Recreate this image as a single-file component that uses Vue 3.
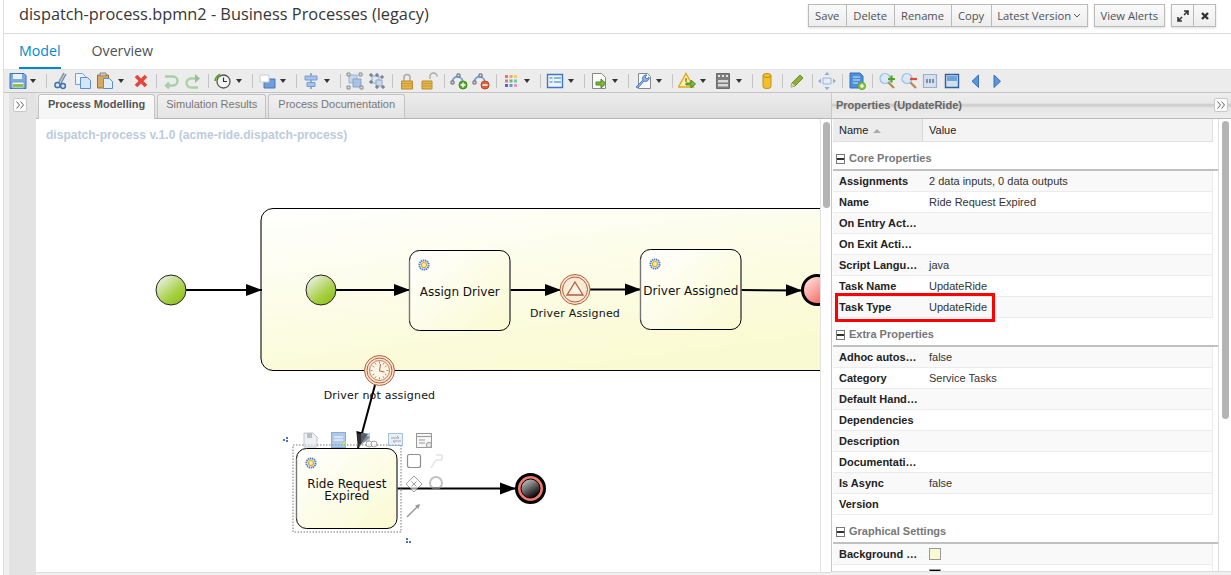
<template>
  <div class="page">
    <header class="title-bar">
      <h1>dispatch-process.bpmn2 - Business Processes (legacy)</h1>
      <div class="actions">
        <div class="btn-group">
          <button>Save</button>
          <button>Delete</button>
          <button>Rename</button>
          <button>Copy</button>
          <button class="version">Latest Version
            <svg width="8" height="5" viewBox="0 0 8 5"><path d="M1 1l3 3 3-3" fill="none" stroke="#555" stroke-width="1" /></svg>
          </button>
        </div>
        <div class="btn-group"><button class="alerts">View Alerts</button></div>
        <div class="btn-group">
          <button class="square">
            <svg width="12" height="12" viewBox="0 0 12 12"><path d="M1 11l4-4M7 5l4-4M7 1h4v4M1 7v4h4" fill="none" stroke="#333" stroke-width="1.6" /></svg>
          </button>
          <button class="square">
            <svg width="10" height="10" viewBox="0 0 10 10"><path d="M2 2l6 6M8 2l-6 6" fill="none" stroke="#333" stroke-width="2.4" /></svg>
          </button>
        </div>
      </div>
    </header>

    <nav class="tabs">
      <a class="active">Model</a>
      <a>Overview</a>
    </nav>

    <div class="toolbar">
      <template v-for="(t, i) in tools" :key="i">
        <span v-if="t === '|'" class="sep" />
        <span v-else class="tool">
          <svg width="18" height="18" viewBox="0 0 18 18">
            <path
              v-for="(p, j) in icons[t.icon]"
              :key="j"
              :d="p[0]"
              :fill="p[1]"
              :stroke="p[2] || 'none'"
              :stroke-width="p[3] || 1"
            />
          </svg>
          <span v-if="t.menu" class="caret" />
        </span>
      </template>
    </div>

    <div class="workspace">
      <aside class="left-strip">
        <span class="collapse">
          <svg width="12" height="12" viewBox="0 0 12 12"><path d="M2.500 2.500l3 3.500-3 3.500M6.500 2.500l3 3.500-3 3.500" fill="none" stroke="#666" /></svg>
        </span>
      </aside>

      <section class="editor">
        <div class="editor-tabs">
          <span class="etab current">Process Modelling</span>
          <span class="etab">Simulation Results</span>
          <span class="etab">Process Documentation</span>
        </div>
        <div class="canvas-wrap">
          <svg class="canvas" viewBox="36 119 784 453" width="784" height="453">
            <defs>
              <linearGradient id="taskFill" x1="0" y1="0" x2="1" y2="1">
                <stop offset="0" stop-color="#ffffff" />
                <stop offset="1" stop-color="#fafad2" />
              </linearGradient>
              <linearGradient id="subFill" x1="0" y1="0" x2="0.5" y2="1">
                <stop offset="0" stop-color="#ffffff" />
                <stop offset="1" stop-color="#fafad2" />
              </linearGradient>
              <linearGradient id="startFill" x1="0.15" y1="0.1" x2="0.8" y2="0.9">
                <stop offset="0" stop-color="#e8efdf" />
                <stop offset="0.65" stop-color="#a9d048" />
                <stop offset="1" stop-color="#93c41f" />
              </linearGradient>
              <linearGradient id="endFill" x1="0.1" y1="0.1" x2="0.8" y2="0.9">
                <stop offset="0" stop-color="#ffe3e0" />
                <stop offset="1" stop-color="#f4635a" />
              </linearGradient>
              <linearGradient id="sphere" x1="0.2" y1="0.1" x2="0.7" y2="0.9">
                <stop offset="0" stop-color="#b8b8b8" />
                <stop offset="1" stop-color="#0c0c0c" />
              </linearGradient>
              <radialGradient id="eventFill">
                <stop offset="0" stop-color="#fdf6e6" />
                <stop offset="1" stop-color="#f8e3cf" />
              </radialGradient>
              <g id="gear">
                <circle r="4.6" fill="none" stroke="#4f7fc4" stroke-width="2" stroke-dasharray="1.4 0.6" />
                <circle r="3.2" fill="#fff" />
                <circle r="2.5" fill="#fdf3b4" stroke="#dca51e" stroke-width="1.2" />
              </g>
            </defs>

            <text class="proc-name" x="46" y="139">dispatch-process v.1.0 (acme-ride.dispatch-process)</text>

            <rect x="261" y="208.5" width="600" height="162" rx="12" fill="url(#subFill)" stroke="#000" />
            <path d="M261 220v139" stroke="#777" stroke-width="2" fill="none" />

            <g v-for="(f, i) in flows" :key="i">
              <line :x1="f[0]" :y1="f[1]" :x2="f[2]" :y2="f[3]" stroke="#000" stroke-width="2" />
              <polygon :points="arrowHead(f)" fill="#000" />
            </g>

            <circle cx="171" cy="290" r="15" fill="url(#startFill)" stroke="#222" />
            <circle cx="321" cy="290" r="15" fill="url(#startFill)" stroke="#222" />

            <g v-for="t in tasks" :key="t.x">
              <rect :x="t.x" :y="t.y" width="100.5" height="80" rx="10" fill="url(#taskFill)" stroke="#000" />
              <path :d="`M${t.x} ${t.y + 10}v60M${t.x + 100.5} ${t.y + 10}v60`" stroke="#777" stroke-width="1.4" fill="none" />
              <use href="#gear" :x="t.x + 14.5" :y="t.y + 14.5" />
              <text v-for="(line, k) in t.lines" :key="k" class="task-label" :x="t.x + 50.3" :y="line.y">{{ line.text }}</text>
            </g>

            <!-- signal catch -->
            <circle cx="575" cy="289.5" r="15" fill="url(#eventFill)" stroke="#b0603c" />
            <circle cx="575" cy="289.5" r="12.5" fill="none" stroke="#b0603c" />
            <path d="M575 282l8 13h-16z" fill="none" stroke="#b0603c" stroke-width="1.3" />
            <text class="event-label" x="575" y="317">Driver Assigned</text>

            <circle cx="817" cy="290" r="14.5" fill="url(#endFill)" stroke="#000" stroke-width="3" />

            <!-- timer boundary -->
            <circle cx="379.5" cy="370.5" r="15" fill="url(#eventFill)" stroke="#b0603c" />
            <circle cx="379.5" cy="370.5" r="12.5" fill="none" stroke="#b0603c" />
            <circle cx="379.5" cy="370.5" r="10" fill="#fdf6e6" stroke="#b0603c" stroke-width="0.8" />
            <path d="M379.5 361.5v2M379.5 377.5v2M370.5 370.5h2M386.5 370.5h2M375 363l1 1.6M384 378l-1-1.6M372.6 366l1.6 1M386.4 375l-1.6-1M384 363l-1 1.6M375 378l1-1.6M386.4 366l-1.6 1M372.6 375l1.6-1" stroke="#b0603c" stroke-width="0.8" fill="none" />
            <path d="M380.5 364l-1 7 5 1" stroke="#b0603c" stroke-width="1" fill="none" />
            <text class="event-label" x="379.5" y="399">Driver not assigned</text>

            <!-- selected element decorations -->
            <rect x="293" y="445" width="108" height="87" fill="none" stroke="#777" stroke-dasharray="1.5 1.5" />
            <g fill="#4a77b8">
              <path d="M283 439h2v2h-2zM286 437h2v2h-2zM286 440h2v2h-2z" />
              <path d="M406 538h2v2h-2zM406 541h2v2h-2zM409 541h2v2h-2z" />
            </g>
            <g opacity="0.6">
              <path d="M304 433h9l4 4v10h-13z" fill="#e4e8ee" stroke="#98a0ac" />
              <path d="M307 433h5v5h-5z" fill="#8d95a2" />
              <rect x="331.5" y="432.5" width="14" height="15" fill="#7ba8dc" stroke="#3c78c0" />
              <path d="M334 437h9M334 440h9" stroke="#fff" />
              <path d="M341 444l5-3v6z" fill="#8cc63f" />
              <path d="M361 433h9v9h-9z" fill="#8aa6cc" />
              <circle cx="369" cy="444" r="3" fill="#fff" stroke="#666" />
              <circle cx="374" cy="444" r="3" fill="#fff" stroke="#666" />
              <rect x="388.5" y="433.5" width="14" height="12" fill="#d8e6f4" stroke="#6a9bd0" />
              <path d="M391 438h8l-2-2M401 441h-8l2 2" fill="none" stroke="#666" />
              <rect x="416.5" y="433.5" width="15" height="14" fill="#f2f2f2" stroke="#555" />
              <path d="M417 436.5h14M419 440h6M419 443h6" stroke="#555" />
              <circle cx="429" cy="445" r="2.6" fill="#ddd" stroke="#555" />
            </g>
            <polygon points="357,433 358,448 370,437" fill="#555" opacity="0.55" />
            <g opacity="0.6" fill="none">
              <rect x="407.5" y="454.5" width="13" height="13" rx="2" stroke="#444" stroke-width="1.2" fill="#fff" />
              <path d="M431 468l5-8h6M436 455h6v5" stroke="#bbb" />
              <path d="M414 476l8 8-8 8-8-8z" stroke="#666" fill="#fff" />
              <path d="M411.5 481.5l5 5M416.5 481.5l-5 5" stroke="#666" />
              <circle cx="436" cy="483" r="6" stroke="#999" stroke-width="2" />
              <path d="M407 517l12-12" stroke="#555" stroke-width="1.4" />
              <path d="M420 504l-5 1.5 3.5 3.5z" fill="#555" />
            </g>

            <!-- end event -->
            <circle cx="530.5" cy="488.5" r="14" fill="#f3796d" stroke="#000" stroke-width="3" />
            <circle cx="530.5" cy="488.5" r="9.5" fill="url(#sphere)" stroke="#000" />
          </svg>
          <div class="v-scroll"><span class="thumb canvas-thumb" /></div>
        </div>
      </section>

      <aside class="props">
        <div class="props-head">
          <span>Properties (UpdateRide)</span>
          <span class="collapse">
            <svg width="12" height="12" viewBox="0 0 12 12"><path d="M2.500 2.500l3 3.500-3 3.500M6.500 2.500l3 3.500-3 3.500" fill="none" stroke="#666" /></svg>
          </span>
        </div>
        <div class="props-body">
          <div class="grid">
            <div class="grid-head">
              <div class="col-name">Name <i class="sort" /></div>
              <div class="col-value">Value</div>
            </div>
            <section v-for="g in groups" :key="g.title">
              <div class="group-title"><i class="minus" />{{ g.title }}</div>
              <div v-for="r in g.rows" :key="r.name" class="row">
                <div class="cell-name">{{ r.name }}</div>
                <div class="cell-value">
                  <i v-if="r.swatch" class="swatch" :style="{ background: r.swatch }" />
                  {{ r.value }}
                </div>
                <span v-if="r.marked" class="highlight" />
              </div>
            </section>
          </div>
          <div class="v-scroll"><span class="thumb props-thumb" /></div>
        </div>
      </aside>
    </div>
  </div>
</template>

<script setup>
const circle = (cx, cy, r) => `M${cx - r} ${cy}a${r} ${r} 0 1 0 ${r * 2} 0a${r} ${r} 0 1 0 ${-r * 2} 0z`

// [d, fill, stroke, strokeWidth]
const icons = {
  save: [
    ['M1 1.5h14l2 2v13H1z', '#7fa9de', '#3b72b8'],
    ['M4 2h9v5H4z', '#e8f0fa'],
    ['M3 10h12v6H3z', '#f4f8f0', '#6d9ad0'],
    ['M4 12h10v3H4z', '#8cc152'],
  ],
  cut: [
    ['M12 1L7 10', 'none', '#8f97a3', 1.6],
    ['M14 2L9 11', 'none', '#5c86c0', 1.4],
    [circle(5.5, 13, 2.6), '#dbe7f5', '#3f6fb0', 1.5],
    [circle(11, 14, 2.4), '#dbe7f5', '#3f6fb0', 1.5],
  ],
  copy: [
    ['M1.5 1.5h7l3 3v8h-10z', '#eef4fb', '#6f9fd8'],
    ['M6.5 5.5h7l3 3v8h-10z', '#d5e4f6', '#5a8fd0'],
  ],
  paste: [
    ['M1.5 3h11v13h-11z', '#d8a860', '#9c6e2c'],
    ['M4 1h6v3H4z', '#c9c9c9', '#888'],
    ['M7.5 6.5h6l3 3v7h-9z', '#e4eefa', '#5a8fd0'],
  ],
  del: [['M4 4l10 10M14 4L4 14', 'none', '#e2463f', 3.6]],
  undo: [['M3 4.500h8a4.500 4.500 0 0 1 0 9H5M7 10.500l-3 3 3 3', 'none', '#a6cfa6', 2.4]],
  redo: [
    ['M12 6.500H7a4.500 4.500 0 0 0 0 9h7', 'none', '#a8d2a8', 2.4],
    ['M11 2l5 4.500-5 4.500z', '#94c494'],
  ],
  history: [
    [circle(9.5, 9.5, 6.5), '#f4f4f4', '#555', 1.3],
    ['M9.5 5.5v4h3.5', 'none', '#333', 1.2],
    ['M1 9a8 8 0 0 1 4-6l-1 3', 'none', '#5aa02c', 1.6],
  ],
  front: [
    ['M6 7h11v9H6z', '#6f9fd8', '#4477bb'],
    ['M2 3h9v7H2z', '#fff', '#ccc'],
  ],
  align: [
    ['M9 1v16', 'none', '#666'],
    ['M3 4h12v4H3z', '#a6c2e8', '#6f9fd8'],
    ['M5 10.500h8v4H5z', '#a6c2e8', '#6f9fd8'],
  ],
  group: [
    ['M3 3h8v8H3z', '#c4d5ea', '#9db4d2'],
    ['M7 7h8v8H7z', '#a8c2e3', '#85a3c8'],
    ['M1 1h3v3H1zM13 1h3v3h-3zM1 14h3v3H1zM14 14h3v3h-3z', '#e4e4e4', '#888'],
  ],
  ungroup: [
    ['M4 4h7v7H4z', '#dbe6f3', '#8fa9cc'],
    ['M8 8h6v6H8z', '#c8d8ec', '#8fa9cc'],
    ['M2 2h2v2H2zM8 2h2v2H8zM13 4h2v2h-2zM2 9h2v2H2zM8 14h2v2H8zM14 14h2v2h-2z', '#cbd6e3', '#667'],
  ],
  lock: [
    ['M6 9V5.500a3 3 0 0 1 6 0V9', 'none', '#aaa', 1.5],
    ['M3.500 9h11v8h-11z', '#e6b64c', '#b98a2a'],
    ['M3.500 11.500h11M3.500 14h11', 'none', '#c89a38'],
  ],
  unlock: [
    ['M10 7V4.500a3.500 3.500 0 0 1 7 0', 'none', '#aaa', 1.4],
    ['M2 9h10v8H2z', '#e6b64c', '#b98a2a'],
    ['M2 11.500h10M2 14h10', 'none', '#c89a38'],
  ],
  addPoint: [
    ['M2 11C3 4 8 3 12 7l1 4', 'none', '#6f9fd8', 1.6],
    ['M1 9h3v3H1zM7 2h3v3H7z', '#ddd', '#666'],
    [circle(13, 13, 4), '#59a82d', '#3f8a1b'],
    ['M13 10.500v5M10.500 13h5', 'none', '#fff', 1.4],
  ],
  delPoint: [
    ['M2 11C3 4 8 3 12 7l1 4', 'none', '#6f9fd8', 1.6],
    ['M1 9h3v3H1zM7 2h3v3H7z', '#ddd', '#666'],
    [circle(13, 13, 4), '#e2603a', '#c2461f'],
    ['M10.500 13h5', 'none', '#fff', 1.6],
  ],
  grid: [
    ['M3 3h3v3H3z', '#f07070'],
    ['M7.500 3h3v3h-3z', '#f2a860'],
    ['M12 3h3v3h-3z', '#f2d060'],
    ['M3 7.500h3v3H3z', '#d07ab0'],
    ['M7.500 7.500h3v3h-3z', '#70b870'],
    ['M12 7.500h3v3h-3z', '#70c8a8'],
    ['M3 12h3v3H3z', '#4f6fb8'],
    ['M7.500 12h3v3h-3z', '#7090d8'],
    ['M12 12h3v3h-3z', '#f090c8'],
  ],
  form: [
    ['M1.500 2.500h15v13h-15z', '#eef4fb', '#3f78c0', 1.4],
    ['M3.500 6h3M8 6h7M3.500 10h3M8 10h7', 'none', '#6f9fd8', 1.4],
  ],
  docIn: [
    ['M2.500 1.500h9l4 4v11h-13z', '#fafafa', '#888'],
    ['M6 10h5V7l5 4.500-5 4.500v-3H6z', '#7cb342', '#4c8a1f'],
  ],
  wrench: [
    ['M4.500 1.500h9l3 3v12h-12z', '#fafafa', '#888'],
    ['M2 15l7-7a3.500 3.500 0 0 1 4-5l-2 2 2 2 2-2a3.500 3.500 0 0 1-5 4l-6 7z', '#8fb4e3', '#4a7fc2'],
  ],
  warning: [
    ['M8 1.500L15.500 15h-15z', '#fff2b8', '#e0a820', 1.4],
    ['M8 6v4', 'none', '#c8871a', 1.8],
    ['M8 11h5V8l4.500 4-4.500 4v-3H8z', '#7cb342', '#4c8a1f'],
  ],
  film: [
    ['M2.500 1.500h13v15h-13z', '#7e7e7e', '#6a6a6a'],
    ['M4 3h2v2H4zM8 3h2v2H8zM12 3h2v2h-2z', '#e4e4e4'],
    ['M4 8h10v2.500H4zM4 12h10v2.500H4z', '#d8d8d8'],
  ],
  db: [
    ['M5 3.500a4 2 0 0 1 8 0v11a4 2 0 0 1-8 0z', '#f0c030', '#c09010'],
    ['M5 3.500a4 2 0 0 0 8 0', 'none', '#c09010'],
  ],
  pencil: [
    ['M3 15l1-4 8-8 3 3-8 8z', '#8fae3c', '#6f8c24'],
    ['M3 15l1-4 3 3z', '#dcdcb0'],
  ],
  move: [
    ['M5 6h8v6H5z', '#e4ecf6', '#9fb4d0'],
    ['M9 0l2.500 3h-5zM9 18l2.500-3h-5zM0 9l3-2.500v5zM18 9l-3-2.500v5z', '#8fadd8'],
  ],
  addDoc: [
    ['M2 1h10l3 3v12H2z', '#4d90d8', '#2f6fb8'],
    ['M5 5h7M5 8h7M5 11h5', 'none', '#cfe2f6', 1.2],
    [circle(14, 14, 3.6), '#8cc63f', '#6ea82a'],
    ['M14 12v4M12 14h4', 'none', '#fff', 1.2],
  ],
  zoomIn: [
    ['M10 10l6 6', 'none', '#b28a4a', 2.2],
    [circle(7, 6.5, 5), '#d8e9f8', '#9dbcdc', 1.2],
    ['M10 7h7M13.500 3.500v7', 'none', '#55a02c', 2.2],
  ],
  zoomOut: [
    ['M10 10l6 6', 'none', '#b28a4a', 2.2],
    [circle(7, 6.5, 5), '#d8e9f8', '#9dbcdc', 1.2],
    ['M10 7h7', 'none', '#e04b3f', 2.2],
  ],
  actual: [
    ['M1.500 2.500h13v13h-13z', '#d6e0ee', '#9bb0cc', 1.2],
    ['M4 7h2v4H4zM7 7h2v4H7zM10 7h2v4h-2z', '#7d8fa8'],
  ],
  fit: [
    ['M1.500 2.500h13v13h-13z', '#cfe0f0', '#2f5f9c', 1.4],
    ['M3 4h10v5H3z', '#6fa4d4'],
  ],
  prev: [['M12.500 3v12.500L6 9.250z', '#5a94dc', '#3b72b8']],
  next: [['M6 3v12.500l6.500-6.250z', '#5a94dc', '#3b72b8']],
}

const tool = (icon, menu = false) => ({ icon, menu })

const tools = [
  tool('save', true), '|',
  tool('cut'), tool('copy'), tool('paste', true), tool('del'), '|',
  tool('undo'), tool('redo'), '|',
  tool('history', true), '|',
  tool('front', true), '|',
  tool('align', true), '|',
  tool('group'), tool('ungroup'), '|',
  tool('lock'), tool('unlock'), '|',
  tool('addPoint'), tool('delPoint'), '|',
  tool('grid', true), '|',
  tool('form', true), '|',
  tool('docIn', true), '|',
  tool('wrench', true), '|',
  tool('warning', true), tool('film', true), '|',
  tool('db'), '|',
  tool('pencil'), '|',
  tool('move'), '|',
  tool('addDoc'), '|',
  tool('zoomIn'), tool('zoomOut'), tool('actual'), tool('fit'), tool('prev'), tool('next'),
]

const flows = [
  [186, 290, 262, 290],
  [336, 290, 410, 290],
  [510, 290, 561, 290],
  [590, 289.5, 641, 289.5],
  [741, 290, 802, 290.5],
  [375, 385, 358, 448],
  [397, 488.5, 516, 488.5],
]

const arrowHead = ([x1, y1, x2, y2]) => {
  const len = Math.hypot(x2 - x1, y2 - y1)
  const ux = (x2 - x1) / len
  const uy = (y2 - y1) / len
  const bx = x2 - ux * 16
  const by = y2 - uy * 16
  return `${x2},${y2} ${bx - uy * 6},${by + ux * 6} ${bx + uy * 6},${by - ux * 6}`
}

const tasks = [
  { x: 409.5, y: 250.5, lines: [{ text: 'Assign Driver', y: 296 }] },
  { x: 640.5, y: 249.5, lines: [{ text: 'Driver Assigned', y: 295 }] },
  { x: 296.5, y: 448.5, lines: [{ text: 'Ride Request', y: 488 }, { text: 'Expired', y: 500 }] },
]

const groups = [
  {
    title: 'Core Properties',
    rows: [
      { name: 'Assignments', value: '2 data inputs, 0 data outputs' },
      { name: 'Name', value: 'Ride Request Expired' },
      { name: 'On Entry Act…', value: '' },
      { name: 'On Exit Acti…', value: '' },
      { name: 'Script Langu…', value: 'java' },
      { name: 'Task Name', value: 'UpdateRide' },
      { name: 'Task Type', value: 'UpdateRide', marked: true },
    ],
  },
  {
    title: 'Extra Properties',
    rows: [
      { name: 'Adhoc autos…', value: 'false' },
      { name: 'Category', value: 'Service Tasks' },
      { name: 'Default Hand…', value: '' },
      { name: 'Dependencies', value: '' },
      { name: 'Description', value: '' },
      { name: 'Documentati…', value: '' },
      { name: 'Is Async', value: 'false' },
      { name: 'Version', value: '' },
    ],
  },
  {
    title: 'Graphical Settings',
    rows: [
      { name: 'Background …', value: '', swatch: '#fafad2' },
      { name: 'Border Color', value: '', swatch: '#000' },
    ],
  },
]
</script>

<style scoped>
.page {
  width: 1228px;
  height: 575px;
  margin-left: 3px;
  border-left: 1px solid #ddd;
  box-sizing: border-box;
  overflow: hidden;
  display: flex;
  flex-direction: column;
  background: #fff;
  font-family: "Liberation Sans", Arial, sans-serif;
}

.title-bar {
  height: 34px;
  box-sizing: border-box;
  flex: none;
  display: flex;
  justify-content: space-between;
  padding: 4px 15px 0 15px;
  border-bottom: 1px solid #dcdcdc;
}

h1 {
  margin: 0;
  font: 400 16.33px/21px "Open Sans", sans-serif;
  color: #363636;
}

.actions {
  display: flex;
  gap: 6px;
  height: 23px;
}

.btn-group {
  display: flex;
  box-shadow: 0 1px 2px rgba(0, 0, 0, 0.15);
}

.btn-group button {
  height: 23px;
  box-sizing: border-box;
  padding: 0 6.5px;
  margin-left: -1px;
  border: 1px solid #bbb;
  background: linear-gradient(#fafafa, #ededed);
  font: 400 11.2px "Open Sans", sans-serif;
  color: #4d5258;
  display: flex;
  align-items: center;
  justify-content: center;
  gap: 2px;
}

.btn-group button:first-child {
  margin-left: 0;
}

.btn-group .version {
  padding: 0 5.5px;
}

.btn-group .alerts {
  padding: 0 6px;
}

.btn-group .square {
  width: 23px;
  padding: 0;
}

.tabs {
  height: 35px;
  flex: none;
  box-sizing: border-box;
  display: flex;
  gap: 31px;
  padding-left: 15px;
}

.tabs a {
  font: 400 14.2px/33px "Open Sans", sans-serif;
  color: #4d5258;
  height: 35px;
  box-sizing: border-box;
}

.tabs a.active {
  color: #0088ce;
  border-bottom: 2px solid #0088ce;
}

.toolbar {
  height: 24px;
  flex: none;
  box-sizing: border-box;
  display: flex;
  align-items: center;
  padding-left: 2px;
  background: #ececec;
  border-top: 1px solid #e4e4e4;
  border-bottom: 1px solid #c4c4c4;
}

.tool {
  display: flex;
  align-items: center;
}

.tool svg {
  width: 18px;
  height: 18px;
  padding: 0 2px;
}

.tool:first-child {
  padding-left: 1px;
}

.caret {
  width: 10px;
  margin-right: 4px;
  height: 4px;
  position: relative;
}

.tool:first-child .caret {
  width: 9px;
}

.caret::after {
  content: "";
  position: absolute;
  left: 2px;
  top: 0;
  border-left: 3px solid transparent;
  border-right: 3px solid transparent;
  border-top: 4px solid #333;
}

.tool:first-child .caret::after {
  left: 1px;
}

.sep {
  width: 1px;
  height: 14px;
  margin: 0 3px 0 4px;
  background: #c4c4c4;
}

.workspace {
  flex: 1;
  display: flex;
  min-height: 0;
  background: #f0f0f0;
}

.left-strip {
  width: 27px;
  margin-left: 5px;
  flex: none;
  background: #e3e3e3;
  padding: 5px 0 0 4px;
  box-sizing: border-box;
}

.collapse {
  display: flex;
  align-items: center;
  justify-content: center;
  width: 14px;
  height: 14px;
  box-sizing: border-box;
  border: 1px solid #c8c8c8;
  border-radius: 2px;
  background: #fbfbfb;
}

.editor {
  width: 795px;
  flex: none;
  display: flex;
  flex-direction: column;
}

.editor-tabs {
  height: 26px;
  flex: none;
  box-sizing: border-box;
  display: flex;
  gap: 2px;
  padding: 1px 0 0 2px;
  background: linear-gradient(#ececec, #dedede);
  border-bottom: 1px solid #b4b4b4;
}

.etab {
  height: 24px;
  box-sizing: border-box;
  padding: 0 9px;
  border: 1px solid #c4c4c4;
  border-bottom: 0;
  border-radius: 3px 3px 0 0;
  background: linear-gradient(#f0f0f0, #e4e4e4);
  font: 400 11px/19px "Liberation Sans", sans-serif;
  color: #777;
}

.etab.current {
  height: 25px;
  background: linear-gradient(#fafafa, #f4f4f4);
  font-weight: 700;
  color: #555;
  z-index: 1;
}

.etab.current + .etab {
  padding: 0 8px;
}

.canvas-wrap {
  height: 453px;
  flex: none;
  display: flex;
  background: #fff;
  border-bottom: 1px solid #dcdce0;
}

.canvas {
  display: block;
  flex: none;
}

.proc-name {
  font: 700 12px "Liberation Sans", sans-serif;
  letter-spacing: 0.04px;
  fill: #bccbde;
}

.task-label {
  font: 400 12px "DejaVu Sans", sans-serif;
  text-anchor: middle;
  fill: #111;
}

.event-label {
  font: 400 11px "DejaVu Sans", sans-serif;
  letter-spacing: 0.2px;
  text-anchor: middle;
  fill: #111;
}

.v-scroll {
  flex: 1;
  position: relative;
  background: #fff;
  border-left: 1px solid #e4e4e4;
}

.thumb {
  display: block;
  width: 7px;
  margin-left: 2px;
  border-radius: 4px;
  background: #b4b4b4;
}

.canvas-thumb {
  height: 86px;
  margin-top: 3px;
}

.props {
  flex: 1;
  min-width: 0;
  display: flex;
  flex-direction: column;
  border-left: 1px solid #c8c8c8;
  height: 479px;
}

.props-head {
  height: 26px;
  flex: none;
  box-sizing: border-box;
  display: flex;
  justify-content: space-between;
  padding: 5px 3px 0 4px;
  background: linear-gradient(#ededed 0, #e8e8e8 40%, #c9c9c9 48%, #e6e6e6 60%, #ededed 100%);
  border-bottom: 1px solid #bbb;
  font: 700 11px/15px "Liberation Sans", sans-serif;
  color: #666;
}

.props-body {
  flex: 1;
  min-height: 0;
  display: flex;
  background: #fff;
  border-bottom: 1px solid #dcdce0;
}

.grid {
  width: 387px;
  flex: none;
  box-sizing: border-box;
  overflow: hidden;
  padding-left: 1px;
  border-right: 1px solid #ddd;
}

.grid-head {
  height: 23px;
  width: 380px;
  box-sizing: border-box;
  display: flex;
  background: #f4f4f4;
  border-bottom: 1px solid #e0e0e0;
  font: 400 11px/23px "Liberation Sans", sans-serif;
  color: #222;
}

.col-name {
  width: 90px;
  box-sizing: border-box;
  padding-left: 6px;
  background: #ececec;
  border-right: 1px solid #d8d8d8;
}

.col-value {
  flex: 1;
  padding-left: 6px;
  border-right: 1px solid #e0e0e0;
}

.sort {
  display: inline-block;
  margin-left: 2px;
  vertical-align: 1px;
  border-left: 4px solid transparent;
  border-right: 4px solid transparent;
  border-bottom: 4px solid #aaa;
}

.group-title {
  height: 29px;
  box-sizing: border-box;
  padding: 8px 0 0 3px;
  border-bottom: 2px solid #c0c0c0;
  font: 700 11px/16px "Liberation Sans", sans-serif;
  color: #777;
  display: flex;
  align-items: flex-start;
}

.minus {
  width: 7px;
  height: 8px;
  margin: 4px 4px 0 0;
  border: 1px solid #777;
  background: linear-gradient(#fff 0, #fff 3px, #333 3px, #333 5px, #fff 5px);
  flex: none;
}

.row {
  position: relative;
  height: 21px;
  width: 380px;
  box-sizing: border-box;
  display: flex;
  border-bottom: 1px solid #ececec;
  border-right: 1px solid #ececec;
  font: 400 11px/20px "Liberation Sans", sans-serif;
  color: #333;
}

section > .row:nth-of-type(even) {
  background: #f9f9f9;
}

.cell-name {
  width: 90px;
  flex: none;
  box-sizing: border-box;
  padding-left: 6px;
  font-weight: 700;
  color: #222;
  white-space: nowrap;
}

.cell-value {
  padding-left: 6px;
  display: flex;
  align-items: center;
}

.swatch {
  width: 10px;
  height: 10px;
  border: 1px solid #999;
}

.highlight {
  position: absolute;
  left: 2px;
  top: -4px;
  width: 160px;
  height: 29px;
  box-sizing: border-box;
  border: 3px solid #f00;
}

.props-body .v-scroll {
  border-left: 0;
}

.props-thumb {
  height: 298px;
  margin: 2px 0 0 3px;
}
</style>
